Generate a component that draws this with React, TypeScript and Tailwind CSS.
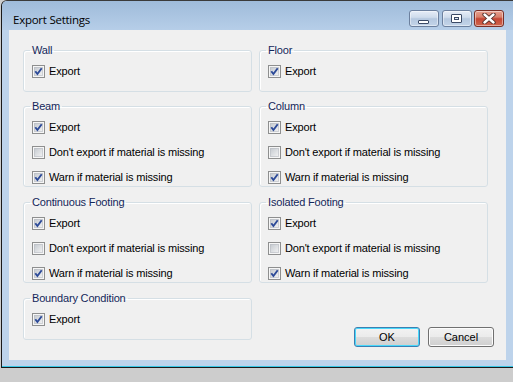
import React from "react";

const uiFont = { fontFamily: '"Liberation Sans", Arial, sans-serif' };

function CheckBox({ checked, label }: { checked?: boolean; label: string }) {
  return (
    <label className="flex items-center gap-[4px] h-[13px] text-[11px] leading-[13px] tracking-[-0.17px] text-black">
      <svg width="13" height="13" viewBox="0 0 13 13" className="shrink-0">
        <defs>
          <linearGradient id="cbInner" x1="0" y1="0" x2="1" y2="1">
            <stop offset="0" stopColor="#c3c8ce" />
            <stop offset="1" stopColor="#f4f4f5" />
          </linearGradient>
        </defs>
        <rect x="0.5" y="0.5" width="12" height="12" fill="#f6f6f6" stroke="#8e8f8f" />
        <rect x="2" y="2" width="9" height="9" fill="url(#cbInner)" />
        <rect x="2.5" y="2.5" width="8" height="8" fill="none" stroke="#b9bdc3" strokeOpacity="0.6" />
        {checked && (
          <path
            d="M3.3 6.2 L5.4 9 L9.7 3.2"
            fill="none"
            stroke="#2c4a98"
            strokeWidth="1.9"
            strokeLinejoin="miter"
          />
        )}
      </svg>
      <span>{label}</span>
    </label>
  );
}

function Group({ title, tall, children }: { title: string; tall?: boolean; children: React.ReactNode }) {
  return (
    <fieldset
      className={`w-[229px] shrink-0 border border-[#d5dfe5] rounded-[3px] px-[6px] shadow-[inset_1px_1px_0_#ffffff] ${
        tall ? "h-[87px]" : "h-[48px]"
      }`}
    >
      <legend className="px-[2px] text-[11px] leading-[13px] tracking-[-0.17px] text-[#14275a]">{title}</legend>
      <div className="flex flex-col gap-[12px] pt-[8px] pl-[2px]">{children}</div>
    </fieldset>
  );
}

function ThreeRows() {
  return (
    <>
      <CheckBox checked label="Export" />
      <CheckBox label="Don't export if material is missing" />
      <CheckBox checked label="Warn if material is missing" />
    </>
  );
}

function CaptionButton({ kind }: { kind: "min" | "max" | "close" }) {
  const base =
    kind === "close"
      ? "w-[30px] border-[#7a2f26] bg-[linear-gradient(#e8a08f,#d7806c_40%,#c54634_52%,#d0674f)]"
      : "w-[30px] border-[#6c809e] bg-[linear-gradient(#e6edf7,#cfdcec_42%,#b5c8df_52%,#c3d4e9)]";
  return (
    <div
      className={`h-[17px] rounded-[3px] border flex items-center justify-center shadow-[inset_0_0_0_1px_rgba(255,255,255,0.45)] ${base}`}
    >
      {kind === "min" && (
        <svg width="12" height="8" viewBox="0 0 12 8" className="mt-[4px]">
          <rect x="0.5" y="3.5" width="10" height="3" rx="0.5" fill="#ffffff" stroke="#3b4a66" />
        </svg>
      )}
      {kind === "max" && (
        <svg width="12" height="10" viewBox="0 0 12 10">
          <rect x="0.5" y="0.5" width="10" height="8" rx="0.5" fill="#ffffff" stroke="#3b4a66" />
          <rect x="3.5" y="3.5" width="4" height="2" fill="#dfe7f1" stroke="#3b4a66" />
        </svg>
      )}
      {kind === "close" && (
        <svg width="14" height="11" viewBox="0 0 14 11">
          <path d="M2.5 1.5 L11.5 9.5 M11.5 1.5 L2.5 9.5" stroke="#4a2a26" strokeWidth="4.2" strokeLinecap="round" />
          <path d="M2.5 1.5 L11.5 9.5 M11.5 1.5 L2.5 9.5" stroke="#ffffff" strokeWidth="2.4" strokeLinecap="round" />
        </svg>
      )}
    </div>
  );
}

export default function App() {
  return (
    <div className="h-[382px] w-[513px] bg-[#cdcdcd] overflow-hidden" style={uiFont}>
      {/* window */}
      <div className="ml-[1px] w-[512px] h-[368px] flex flex-col border-l border-t border-b border-[#1a1a1a] border-t-[#3a3a3a] rounded-tl-[6px] bg-[#bdd3eb] overflow-hidden">
        {/* title bar */}
        <div className="h-[29px] shrink-0 flex items-start justify-between bg-[linear-gradient(#9fbbda,#b6cee8)]">
          <span
            className="pl-[11px] pt-[11px] text-[11.5px] leading-[15px] tracking-[-0.25px] text-black"
            style={{ fontFamily: '"Open Sans", "Noto Sans", sans-serif' }}
          >
            Export Settings
          </span>
          <div className="flex mt-[9px] pr-[9px]">
            <CaptionButton kind="min" />
            <div className="ml-[3px]">
              <CaptionButton kind="max" />
            </div>
            <div className="ml-[2px]">
              <CaptionButton kind="close" />
            </div>
          </div>
        </div>

        {/* frame + client */}
        <div className="px-[7px] pb-[6px]">
          <div className="h-[330px] bg-[#f0f0f0] pt-[14px] pl-[14px] flex flex-col">
            <div className="flex gap-[7px]">
              <Group title="Wall">
                <CheckBox checked label="Export" />
              </Group>
              <Group title="Floor">
                <CheckBox checked label="Export" />
              </Group>
            </div>
            <div className="flex gap-[7px] mt-[8px]">
              <Group title="Beam" tall>
                <ThreeRows />
              </Group>
              <Group title="Column" tall>
                <ThreeRows />
              </Group>
            </div>
            <div className="flex gap-[7px] mt-[9px]">
              <Group title="Continuous Footing" tall>
                <ThreeRows />
              </Group>
              <Group title="Isolated Footing" tall>
                <ThreeRows />
              </Group>
            </div>
            <div className="flex mt-[9px]">
              <Group title="Boundary Condition">
                <CheckBox checked label="Export" />
              </Group>
              <div className="ml-auto mr-[12px] mt-[35px] flex gap-[8px]">
                <button className="w-[66px] h-[20px] rounded-[3px] border border-[#3c7fb1] bg-[linear-gradient(#f2f2f2,#ebebeb_50%,#dddddd_50%,#cfcfcf)] shadow-[inset_0_0_0_1px_#48d8fb] text-[11px] leading-[13px] text-black">
                  OK
                </button>
                <button className="w-[66px] h-[20px] rounded-[3px] border border-[#707070] bg-[linear-gradient(#f2f2f2,#ebebeb_50%,#dddddd_50%,#cfcfcf)] shadow-[inset_0_0_0_1px_#fcfcfc] text-[11px] leading-[13px] text-black">
                  Cancel
                </button>
              </div>
            </div>
          </div>
        </div>
        <div className="h-[1px] bg-[#37c6e4]" />
      </div>
    </div>
  );
}
